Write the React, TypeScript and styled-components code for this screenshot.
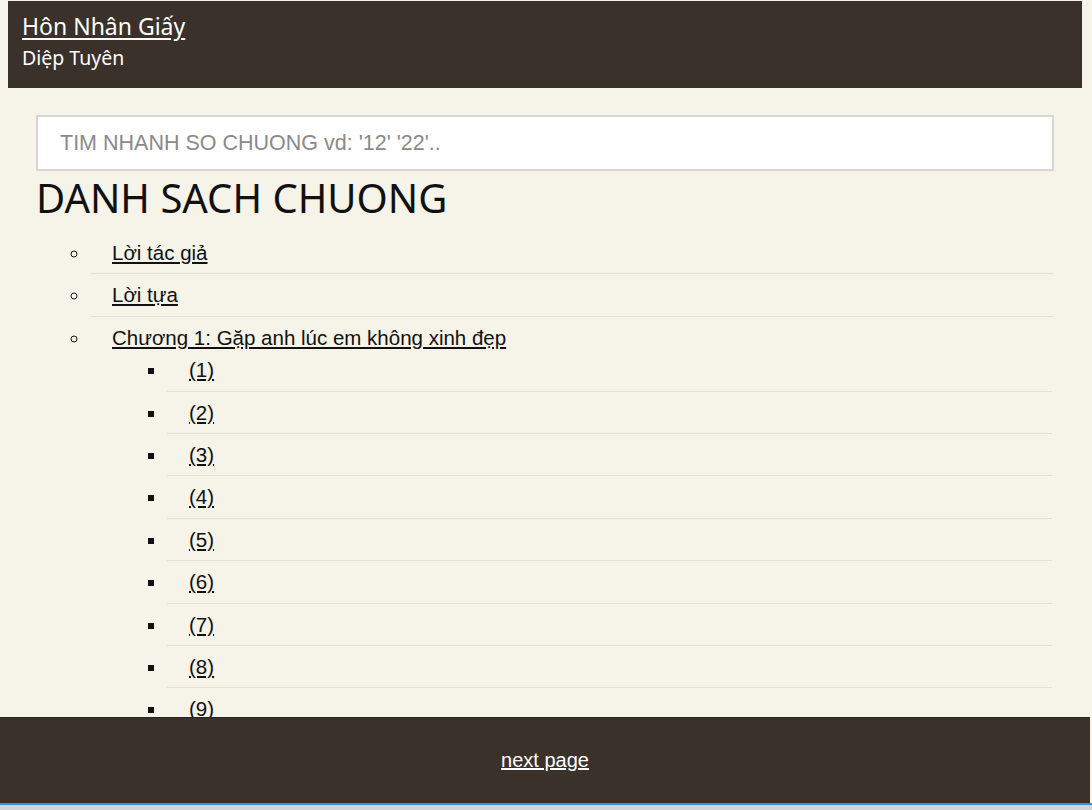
import React from 'react';
import styled, { createGlobalStyle } from 'styled-components';

const GlobalStyle = createGlobalStyle`
    html, body {
        margin: 0;
        padding: 0;
        background: #f6f3e8;
    }
    body {
        font-family: "Liberation Sans", Arial, sans-serif;
        color: #111;
    }
`;

const Page = styled.div`
    padding: 1px 10px 120px 8px;
`;

const Header = styled.header`
    background: #3a312b;
    padding: 10px 14px 16px;
    color: #fff;
`;

const BookTitle = styled.a`
    display: block;
    font-family: "Noto Sans", "Open Sans", sans-serif;
    font-size: 23px;
    line-height: 30px;
    color: #fff;
    text-decoration: underline;
    text-underline-offset: 3px;
    width: fit-content;
`;

const Author = styled.div`
    font-family: "Noto Sans", "Open Sans", sans-serif;
    font-size: 19.5px;
    line-height: 28px;
    margin-top: 3px;
`;

const Content = styled.main`
    padding: 27px 28px 0;
`;

const Search = styled.input`
    box-sizing: border-box;
    display: block;
    width: 100%;
    height: 56px;
    border: 2px solid #d8d6d2;
    background: #fff;
    padding: 0 22px;
    font-family: "Liberation Sans", Arial, sans-serif;
    font-size: 21.5px;
    outline: none;
    &::placeholder {
        color: #8a8a8a;
    }
`;

const Heading = styled.h1`
    font-family: "Noto Sans", "Open Sans", sans-serif;
    font-weight: 400;
    font-size: 40px;
    line-height: 54px;
    margin: 0 0 7px;
    color: #111;
`;

const ChapterList = styled.ul<{ $nested?: boolean }>`
    margin: ${(p) => (p.$nested ? '1px 2px 0 0' : '0')};
    padding: ${(p) => (p.$nested ? '0 0 0 55px' : '0 0 0 54px')};
    list-style-type: ${(p) => (p.$nested ? 'square' : 'circle')};
`;

const Item = styled.li`
    padding: 10px 0 10px 22px;
    font-size: 20.5px;
    line-height: 21.4px;
    border-bottom: 1px solid #e2dfd7;
    &:has(ul) {
        padding-bottom: 0;
    }
`;

const ChapterLink = styled.a`
    color: #111;
    text-decoration: underline;
    cursor: pointer;
`;

const Footer = styled.footer`
    position: fixed;
    left: 0;
    right: 2px;
    bottom: 7px;
    height: 85px;
    background: #3a312b;
    border-top: 1px solid #2a221d;
    display: flex;
    align-items: center;
    justify-content: center;
`;

const NextLink = styled.a`
    color: #fff;
    font-size: 20px;
    text-decoration: underline;
    cursor: pointer;
`;

const BottomStrip = styled.div`
    position: fixed;
    left: 0;
    right: 0;
    bottom: 0;
    height: 5px;
    border-top: 2px solid #3b8fdb;
    background: #d4d4d4;
`;

const parts = ['(1)', '(2)', '(3)', '(4)', '(5)', '(6)', '(7)', '(8)', '(9)'];

export default function App() {
    return (
        <Page>
            <GlobalStyle />
            <Header>
                <BookTitle>Hôn Nhân Giấy</BookTitle>
                <Author>Diệp Tuyên</Author>
            </Header>
            <Content>
                <Search placeholder="TIM NHANH SO CHUONG vd: '12' '22'.." />
                <Heading>DANH SACH CHUONG</Heading>
                <ChapterList>
                    <Item>
                        <ChapterLink>Lời tác giả</ChapterLink>
                    </Item>
                    <Item>
                        <ChapterLink>Lời tựa</ChapterLink>
                    </Item>
                    <Item>
                        <ChapterLink>Chương 1: Gặp anh lúc em không xinh đẹp</ChapterLink>
                        <ChapterList $nested>
                            {parts.map((p) => (
                                <Item key={p}>
                                    <ChapterLink>{p}</ChapterLink>
                                </Item>
                            ))}
                        </ChapterList>
                    </Item>
                </ChapterList>
            </Content>
            <Footer>
                <NextLink>next page</NextLink>
            </Footer>
            <BottomStrip />
        </Page>
    );
}
